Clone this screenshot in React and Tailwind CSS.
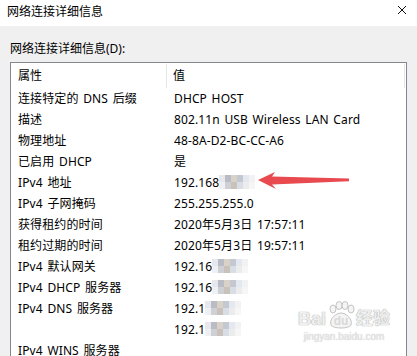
import React from 'react'

const FONT = '"Noto Sans", "Noto Sans CJK SC", sans-serif'

const BLUR_A = ['#e6e8ee', '#b9bcc4', '#d8d2c8', '#c4c8d0', '#e4e8f0', '#f2f2f2']
const BLUR_B = ['#eef0f4', '#cfd0d6', '#c8c2ba', '#d8dde6', '#ececec', '#f6f6f6']

// pixelated mosaic that hides the tail of an IP address
function Mosaic({ cols = 6 }) {
  return (
    <span className="inline-flex flex-col align-middle -mt-[2px]">
      <span className="flex">
        {BLUR_A.slice(0, cols).map((c, i) => (
          <span key={i} className="w-[6px] h-[7px]" style={{ background: c }} />
        ))}
      </span>
      <span className="flex">
        {BLUR_B.slice(0, cols).map((c, i) => (
          <span key={i} className="w-[6px] h-[7px]" style={{ background: c }} />
        ))}
      </span>
    </span>
  )
}

const rows = [
  ['连接特定的 DNS 后缀', 'DHCP HOST'],
  ['描述', '802.11n USB Wireless LAN Card'],
  ['物理地址', '48-8A-D2-BC-CC-A6'],
  ['已启用 DHCP', '是'],
  ['IPv4 地址', <>192.168<Mosaic /></>],
  ['IPv4 子网掩码', '255.255.255.0'],
  ['获得租约的时间', '2020年5月3日 17:57:11'],
  ['租约过期的时间', '2020年5月3日 19:57:11'],
  ['IPv4 默认网关', <>192.16<Mosaic /></>],
  ['IPv4 DHCP 服务器', <>192.16<Mosaic /></>],
  ['IPv4 DNS 服务器', <>192.1<Mosaic /></>],
  ['', <>192.1<Mosaic /></>],
  ['IPv4 WINS 服务器', ''],
]

export default function App() {
  return (
    <div className="relative w-[417px] h-[356px] overflow-hidden bg-[#f0f0f0] text-[12px] text-black" style={{ fontFamily: FONT }}>
      {/* title bar */}
      <div className="h-[26px] bg-white flex items-center justify-between pl-[7px] pr-[10px]">
        <span className="-mt-[2px]">网络连接详细信息</span>
        <svg width="10" height="10" viewBox="0 0 10 10" className="-mt-[6px]">
          <path d="M1 1L9 9M9 1L1 9" stroke="#111" strokeWidth="1" />
        </svg>
      </div>

      <div className="px-[10px] pt-[14px]">
        <div className="h-[22px] leading-[18px]">网络连接详细信息(D):</div>

        <div className="w-[397px] h-[320px] bg-white border border-[#828790]">
          {/* header */}
          <div className="flex h-[25px] items-center pt-[1px]">
            <div className="w-[156px] h-[24px] flex items-center pl-[7px] border-r border-[#e5e5e5]">属性</div>
            <div className="flex-1 h-[24px] flex items-center pl-[6px] border-r border-[#e5e5e5] mr-[1px]">值</div>
          </div>
          {rows.map(([k, v], i) => (
            <div key={i} className="flex h-[21px] items-center tracking-[0.12px] [word-spacing:1.4px]">
              <div className="w-[156px] pl-[7px] whitespace-nowrap">{k}</div>
              <div className="flex-1 pl-[7px] whitespace-nowrap">{v}</div>
            </div>
          ))}
        </div>
      </div>

      {/* red annotation arrow */}
      <svg className="absolute left-[255px] top-[170px]" width="100" height="22" viewBox="255 170 100 22">
        <polygon points="258,180 275,172 272,176.5 349,178.6 349,181.2 272,184.5 276,189" fill="#e84a4f" />
      </svg>

      {/* watermark */}
      <div className="absolute left-[298px] top-[301px] flex flex-col items-center text-[#efefef]" style={{ fontFamily: '"Liberation Sans", "Noto Sans CJK SC", sans-serif' }}>
        <div className="flex items-end">
          <span className="text-[18px] font-bold leading-[20px] [text-shadow:0_0_1px_#aaa,0_0_1px_#aaa]">Bai</span>
          <span className="relative w-[30px] h-[28px] flex items-end justify-center">
            <svg className="absolute left-0 top-0" width="30" height="28" viewBox="0 0 30 28">
              <g fill="#f4f4f4" stroke="#c4c4c4" strokeWidth="1">
                <ellipse cx="7" cy="8" rx="3" ry="4" />
                <ellipse cx="13" cy="4.5" rx="3" ry="4" />
                <ellipse cx="19" cy="4.5" rx="3" ry="4" />
                <ellipse cx="25" cy="8" rx="3" ry="4" />
                <path d="M5 24C3 18 10 12 15 12C20 12 27 18 25 24C23 28 7 28 5 24Z" />
              </g>
            </svg>
            <span className="relative text-[12px] font-bold leading-[14px] mb-[1px] text-[#d8d8d8]">du</span>
          </span>
          <span className="text-[17px] font-bold leading-[20px] [text-shadow:0_0_1px_#aaa,0_0_1px_#aaa]">经验</span>
        </div>
        <span className="text-[10px] leading-[14px] mt-[1px] text-[#e8e8e8] [text-shadow:0_0_1px_#bbb]">jingyan.baidu.com</span>
      </div>
    </div>
  )
}
